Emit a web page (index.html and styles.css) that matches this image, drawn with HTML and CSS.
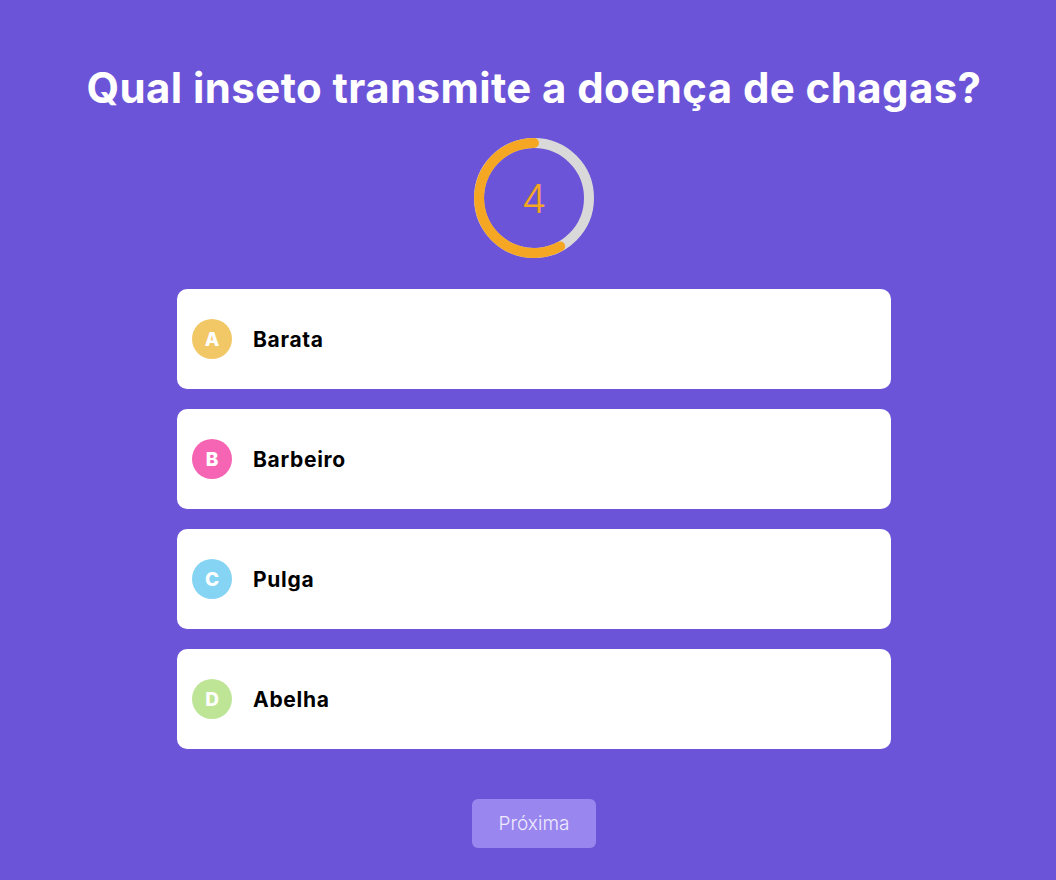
FILE: index.html
```html
<!DOCTYPE html>
<html lang="pt-BR">
<head>
<meta charset="utf-8">
<title>Quiz</title>
<link rel="stylesheet" href="styles.css">
</head>
<body>
<main class="quiz">
  <h1 class="question">Qual inseto transmite a doença de chagas?</h1>
  <div class="timer">
    <svg class="timer-ring" width="120" height="120" viewBox="0 0 120 120">
      <circle cx="60" cy="60" r="55" fill="none" stroke="#d9d9d9" stroke-width="10"/>
      <path d="M60 5 A55 55 0 1 0 86.2 108.4" fill="none" stroke="#f5a623" stroke-width="10" stroke-linecap="round"/>
    </svg>
    <span class="timer-value">4</span>
  </div>
  <ul class="options">
    <li class="option"><span class="badge badge-a">A</span><span class="option-text">Barata</span></li>
    <li class="option"><span class="badge badge-b">B</span><span class="option-text">Barbeiro</span></li>
    <li class="option"><span class="badge badge-c">C</span><span class="option-text">Pulga</span></li>
    <li class="option"><span class="badge badge-d">D</span><span class="option-text">Abelha</span></li>
  </ul>
  <button class="next" type="button">Próxima</button>
</main>
</body>
</html>
```

FILE: styles.css
```css
* { box-sizing: border-box; }
html, body { margin: 0; padding: 0; }
body {
  background: #6c54d8;
  font-family: "Inter", "Open Sans", sans-serif;
  min-height: 880px;
}
.quiz {
  display: flex;
  flex-direction: column;
  align-items: center;
  padding-top: 62px;
  padding-left: 12px;
}
.question {
  margin: 0;
  color: #ffffff;
  font-size: 42px;
  font-weight: 700;
  line-height: 52px;
  letter-spacing: 0.4px;
}
.timer {
  position: relative;
  width: 120px;
  height: 120px;
  margin-top: 24px;
}
.timer-ring { display: block; }
.timer-value {
  position: absolute;
  inset: 0;
  display: flex;
  align-items: center;
  justify-content: center;
  color: #f5a623;
  font-size: 40px;
  font-weight: 300;
}
.options {
  list-style: none;
  margin: 31px 0 0;
  padding: 0;
  display: flex;
  flex-direction: column;
  gap: 20px;
}
.option {
  width: 714px;
  height: 100px;
  background: #ffffff;
  border-radius: 10px;
  display: flex;
  align-items: center;
  padding-left: 15px;
  gap: 21px;
}
.badge {
  width: 40px;
  height: 40px;
  border-radius: 50%;
  display: flex;
  align-items: center;
  justify-content: center;
  color: #ffffff;
  font-size: 19px;
  font-weight: 800;
}
.badge-a { background: #f2c867; }
.badge-b { background: #f665b3; }
.badge-c { background: #85d4f3; }
.badge-d { background: #bee596; }
.option-text {
  color: #000000;
  font-size: 21px;
  font-weight: 700;
  letter-spacing: 0.7px;
}
.next {
  margin-top: 50px;
  width: 124px;
  height: 49px;
  border: none;
  border-radius: 6px;
  background: #9a86ef;
  color: #eeeaff;
  font-family: inherit;
  font-size: 19px;
  font-weight: 300;
  cursor: pointer;
}
```
